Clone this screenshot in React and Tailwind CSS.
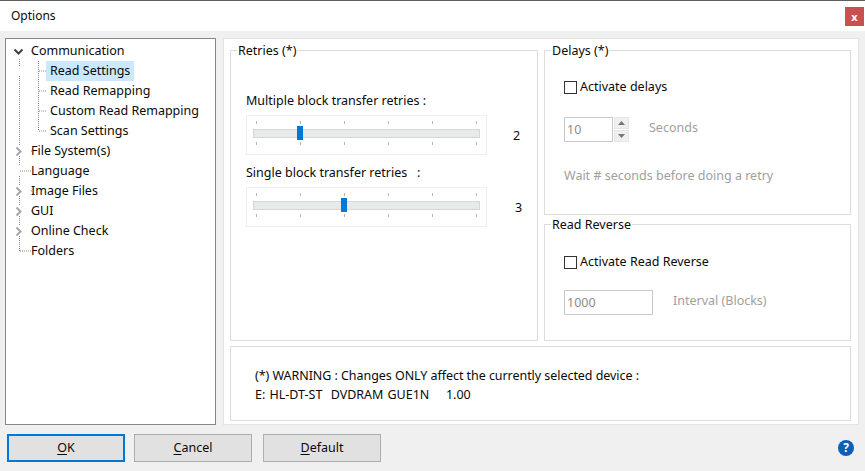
import React from "react";

const treeItems = [
  { label: "Communication", open: true },
  { label: "Read Settings", child: true, selected: true },
  { label: "Read Remapping", child: true },
  { label: "Custom Read Remapping", child: true },
  { label: "Scan Settings", child: true },
  { label: "File System(s)", closed: true },
  { label: "Language" },
  { label: "Image Files", closed: true },
  { label: "GUI", closed: true },
  { label: "Online Check", closed: true },
  { label: "Folders" },
];

const TreeLines = () => (
  <svg className="absolute left-0 top-[1px]" width="60" height="230" fill="none" stroke="#8a8a8a" strokeDasharray="1 1">
    <path d="M13.5 19V26M13.5 36V106M13.5 116V126M13.5 136V146M13.5 156V166M13.5 176V186M13.5 196V211" />
    <path d="M26 11H25M26 111H25M26 151H25M26 171H25M26 191H25" />
    <path d="M32.5 21V91M33 31H41M33 51H41M33 71H41M33 91H41" />
    <path d="M14 131H25M14 211H25" />
  </svg>
);

const Chevron = ({ open }) => (
  <svg className="absolute left-[7px] top-[5px]" width="11" height="11" viewBox="0 0 11 11" fill="none" strokeWidth="2">
    {open ? <path d="M1.5 3.5L5.5 7.5L9.5 3.5" stroke="#404040" /> : <path d="M3.5 1.5L7.5 5.5L3.5 9.5" stroke="#a6a6a6" />}
  </svg>
);

const TreeRow = ({ item }) => (
  <div className={`relative flex h-5 items-center ${item.child ? "pl-[40px]" : "pl-[25px]"}`}>
    {item.open && <Chevron open />}
    {item.closed && <Chevron />}
    <span className={`flex h-5 items-center ${item.child ? "px-[4px]" : ""} ${item.selected ? "bg-[#cce8ff]" : ""}`}>
      {item.label}
    </span>
  </div>
);

const GroupBox = ({ title, className, children }) => (
  <fieldset className={`border border-[#dcdcdc] px-[6px] ${className}`}>
    <legend className="px-[1px] leading-[18px]">
      <span className="inline-block translate-y-px">{title}</span>
    </legend>
    {children}
  </fieldset>
);

const Slider = ({ pos, value, valueClass }) => (
  <div className="flex items-center">
    <div className="relative h-[40px] w-[241px] border border-[#eeeeee] px-[6px]">
      <div className="flex justify-between px-[3px] pt-[5px]">
        {[0, 1, 2, 3, 4, 5].map((i) => (
          <div key={i} className="h-[3px] w-px bg-[#b5b5b5]" />
        ))}
      </div>
      <div className="mt-[5px] h-[9px] border border-[#d6d6d6] bg-[#e7eaea]" />
      <div className="mt-[4px] flex justify-between px-[3px]">
        {[0, 1, 2, 3, 4, 5].map((i) => (
          <div key={i} className="h-[3px] w-px bg-[#b5b5b5]" />
        ))}
      </div>
      <div className={`absolute top-[10px] h-[14px] w-[6px] bg-[#0078d7] ${pos}`} />
    </div>
    <span className={valueClass}>{value}</span>
  </div>
);

const CheckRow = ({ label, className }) => (
  <label className={`flex items-center ${className}`}>
    <span className="h-[13px] w-[13px] border border-[#333333] bg-white" />
    <span className="ml-[3px]">{label}</span>
  </label>
);

const FooterButton = ({ hot, rest, primary }) => (
  <button
    className={`flex h-[28px] w-[118px] items-center justify-center bg-[#e1e1e1] pt-px ${
      primary ? "border-2 border-[#0078d7]" : "border border-[#adadad]"
    }`}
  >
    <u className="underline-offset-2">{hot}</u>
    {rest}
  </button>
);

export default function App() {
  return (
    <div
      className="flex h-[471px] w-[865px] flex-col overflow-hidden border-t border-[#5f5f5f] bg-[#f0f0f0] text-[12.5px] text-[#0a0a0a]"
      style={{ fontFamily: '"Noto Sans", sans-serif' }}
    >
      {/* Title bar */}
      <div className="flex h-[30px] items-center justify-between bg-white pl-[11px] pr-px">
        <span className="text-[12px]">Options</span>
        <button className="flex h-[19px] w-[19px] items-center justify-center bg-[#c75050] text-[11px] font-bold leading-none text-white">
          x
        </button>
      </div>

      {/* Main */}
      <div className="mt-[7px] flex h-[387px] gap-[7px] pl-[5px]">
        <div className="relative h-full w-[211px] border border-[#828790] bg-white pt-[2px]">
          <TreeLines />
          {treeItems.map((item) => (
            <TreeRow key={item.label} item={item} />
          ))}
        </div>

        <div className="h-full w-[636px] border border-[#e3e3e3] bg-white px-[6px] pt-[2px]">
          <div className="flex gap-[6px]">
            <GroupBox title="Retries (*)" className="h-[300px] w-[308px]">
              <div className="pl-[9px]">
                <p className="mt-[33px] mb-[5px] leading-[18px]">Multiple block transfer retries :</p>
                <Slider pos="left-[50px]" value="2" valueClass="ml-[26px] mt-[2px]" />
                <p className="mt-[9px] mb-[5px] whitespace-pre leading-[18px]">Single block transfer retries   :</p>
                <Slider pos="left-[94px]" value="3" valueClass="ml-[28px] mt-[2px]" />
              </div>
            </GroupBox>

            <div className="flex w-[307px] flex-col">
              <GroupBox title="Delays (*)" className="h-[174px]">
                <div className="pl-[13px]">
                  <CheckRow label="Activate delays" className="mt-[19px]" />
                  <div className="mt-[20px] flex items-center text-[#a0a0a0]">
                    <div className="flex h-[25px] w-[49px] items-center border border-[#c8c8c8] pl-[2px] pt-[2px] text-[#8c8c8c]">10</div>
                    <div className="ml-px flex h-[25px] w-[15px] flex-col gap-[1px]">
                      <div className="flex flex-1 items-center justify-center border border-[#e6e6e6] bg-[#f0f0f0]">
                        <svg width="7" height="4"><path d="M3.5 0L7 4H0Z" fill="#777777" /></svg>
                      </div>
                      <div className="flex flex-1 items-center justify-center border border-[#e6e6e6] bg-[#f0f0f0]">
                        <svg width="7" height="4"><path d="M0 0H7L3.5 4Z" fill="#777777" /></svg>
                      </div>
                    </div>
                    <span className="ml-[20px] -translate-y-px">Seconds</span>
                  </div>
                  <p className="mt-[25px] leading-[18px] text-[#a0a0a0]">Wait # seconds before doing a retry</p>
                </div>
              </GroupBox>
              <GroupBox title="Read Reverse" className="h-[126px]">
                <div className="pl-[13px]">
                  <CheckRow label="Activate Read Reverse" className="mt-[20px]" />
                  <div className="mt-[18px] flex items-center text-[#a0a0a0]">
                    <div className="flex h-[25px] w-[89px] items-center border border-[#c8c8c8] pl-[2px] pt-[2px] text-[#8c8c8c]">1000</div>
                    <span className="ml-[20px] -translate-y-px">Interval (Blocks)</span>
                  </div>
                </div>
              </GroupBox>
            </div>
          </div>

          <div className="mt-[5px] h-[75px] w-[621px] whitespace-pre border border-[#dcdcdc] pl-[24px] pt-[19px] leading-[19px]">
            <p className="tracking-[-0.05px]">(*) WARNING : Changes ONLY affect the currently selected device :</p>
            <p className="[word-spacing:0.9px]">E: HL-DT-ST  DVDRAM GUE1N    1.00</p>
          </div>
        </div>
      </div>

      {/* Footer */}
      <div className="flex items-center pl-[7px] pr-[11px] pt-[9px]">
        <FooterButton hot="O" rest="K" primary />
        <div className="ml-[9px]">
          <FooterButton hot="C" rest="ancel" />
        </div>
        <div className="ml-[11px]">
          <FooterButton hot="D" rest="efault" />
        </div>
        <div className="ml-auto flex h-4 w-4 items-center justify-center rounded-full bg-[#0b5fb8] text-[12px] font-bold leading-none text-white">
          ?
        </div>
      </div>
    </div>
  );
}
